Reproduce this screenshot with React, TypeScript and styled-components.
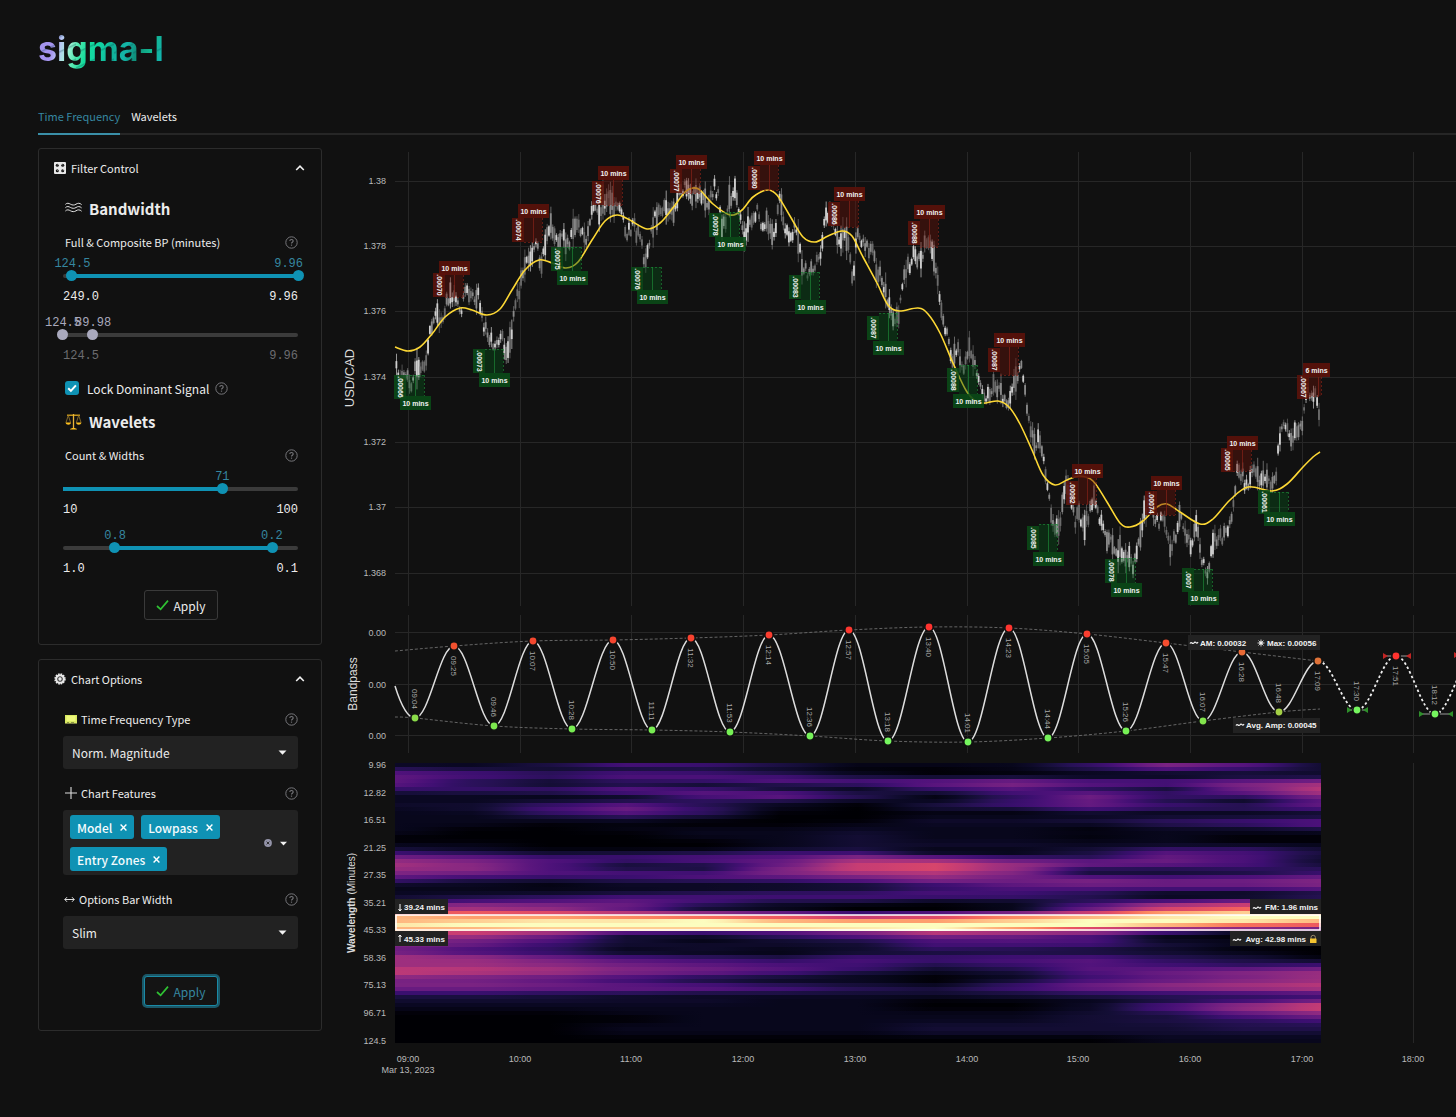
import React, { useState } from "react";
import styled, { createGlobalStyle, css } from "styled-components";

const UI_FONT = `"Noto Sans CJK SC", "Noto Sans", sans-serif`;
const MONO_FONT = `"Liberation Mono", monospace`;
const CHART_FONT = `"Liberation Sans", Arial, sans-serif`;

const color = {
  page: "#111111",
  line: "#2c2c2c",
  field: "#222222",
  text: "#ececec",
  muted: "#6c6c70",
  accent: "#0f92b4",
  accentText: "#3687a0",
  rail: "#3b3b3b",
  locked: "#a9a9bd",
};

const GlobalStyle = createGlobalStyle`
  * { box-sizing: border-box; }
  body {
    margin: 0;
    background: ${color.page};
    color: ${color.text};
    font-family: ${UI_FONT};
    font-size: 11px;
    overflow-x: hidden;
  }
  button, select, input { font: inherit; color: inherit; margin: 0; }
`;

/* ---------- page shell ---------- */

const Page = styled.div`
  min-height: 100vh;
  padding-left: 38px;
`;

const Header = styled.header`
  height: 99px;
  padding-top: 26px;
`;

const Logo = styled.h1`
  display: inline-block;
  margin: 0;
  font-family: Inter, sans-serif;
  font-weight: 700;
  font-size: 34px;
  line-height: 46px;
  color: transparent;
  background:
    linear-gradient(155deg, transparent 44%, rgba(10, 70, 80, 0.3) 50%, transparent 58%) 0 0 / 19px 15px,
    linear-gradient(105deg, #a594ee 0 15%, #b9c9f4 20%, #a5f0d8 26%, #4fe8ae 33%, #14dc9c 40%, #12d0a4 50%, #10b096 58%, #14b6a8 68%, #0f8f7a 76%, #12b890 86%, #12b3a0 92%, #11b9c9 100%);
  background-clip: text;
  -webkit-background-clip: text;
`;

const TabList = styled.nav`
  display: flex;
  gap: 11px;
  border-bottom: 2px solid #262626;
`;

const Tab = styled.button<{ $active?: boolean }>`
  height: 36px;
  margin-bottom: -2px;
  padding: 0;
  border: 0;
  border-bottom: 2px solid ${(p) => (p.$active ? "#3a8fa8" : "transparent")};
  background: none;
  font-size: 11px;
  line-height: 32px;
  color: ${(p) => (p.$active ? color.accentText : color.text)};
  cursor: pointer;
`;

const Workspace = styled.main`
  display: grid;
  grid-template-columns: 284px minmax(0, 1fr);
  gap: 14px;
  align-items: start;
  padding-top: 13px;
`;

const Sidebar = styled.aside`
  display: flex;
  flex-direction: column;
  gap: 14px;
`;

/* ---------- cards ---------- */

const Card = styled.section`
  border: 1px solid ${color.line};
  border-radius: 3px;
`;

const CardHeader = styled.button`
  display: flex;
  align-items: center;
  gap: 5px;
  width: 100%;
  height: 38px;
  padding: 0 16px 0 15px;
  border: 0;
  background: none;
  font-size: 11px;
  text-align: left;
  cursor: pointer;
`;

const Grow = styled.span`
  flex: 1;
`;

const CardBody = styled.form<{ $top: number }>`
  display: flex;
  flex-direction: column;
  padding: ${(p) => p.$top}px 23px 24px 24px;
`;

const GroupTitle = styled.h2<{ $gap?: number }>`
  display: flex;
  align-items: center;
  gap: 7px;
  height: 32px;
  margin: ${(p) => p.$gap ?? 0}px 0 6px;
  padding-left: 2px;
  font-size: 15px;
  font-weight: 700;
`;

const FieldHead = styled.div<{ $gap?: number; $indent?: number }>`
  display: flex;
  align-items: center;
  justify-content: space-between;
  height: 24px;
  margin-top: ${(p) => p.$gap ?? 0}px;
  padding-left: ${(p) => p.$indent ?? 2}px;
`;

const FieldName = styled.label`
  display: flex;
  align-items: center;
  gap: 4px;
  font-size: 11px;
`;

const HelpButton = styled.button`
  display: flex;
  padding: 0;
  border: 0;
  background: none;
  cursor: help;
`;

/* ---------- slider ---------- */

const SliderBox = styled.div<{ $gap?: number }>`
  margin-top: ${(p) => p.$gap ?? 0}px;
  font-family: ${MONO_FONT};
  font-size: 12px;
`;

const SliderValues = styled.div<{ $locked?: boolean }>`
  position: relative;
  height: 16px;
  line-height: 20px;
  color: ${(p) => (p.$locked ? color.locked : color.accentText)};
`;

const SliderValue = styled.output<{ $edge?: boolean }>`
  position: absolute;
  ${(p) =>
    p.$edge
      ? css`right: -5px;`
      : css`transform: translateX(-50%);`}
`;

const SliderRail = styled.div`
  position: relative;
  display: flex;
  align-items: center;
  height: 12px;
`;

const Rail = styled.div`
  width: 100%;
  height: 4px;
  border-radius: 2px;
  background: ${color.rail};
`;

const Fill = styled.div`
  height: 4px;
  background: ${color.accent};
`;

const Thumb = styled.input<{ $locked?: boolean }>`
  position: absolute;
  left: -6px;
  top: 0;
  width: calc(100% + 12px);
  height: 12px;
  appearance: none;
  background: transparent;
  pointer-events: none;

  &::-webkit-slider-runnable-track {
    height: 12px;
    background: transparent;
  }
  &::-webkit-slider-thumb {
    appearance: none;
    width: 11px;
    height: 11px;
    border: 0;
    border-radius: 50%;
    background: ${(p) => (p.$locked ? color.locked : color.accent)};
    pointer-events: auto;
  }
`;

const SliderEnds = styled.div<{ $locked?: boolean }>`
  display: flex;
  justify-content: space-between;
  height: 21px;
  padding-top: 7px;
  line-height: 16px;
  color: ${(p) => (p.$locked ? color.muted : color.text)};
`;

type Stop = { at: number; text: string; edge?: boolean };

function Slider(props: {
  name: string;
  stops: Stop[];
  ends: [string, string];
  locked?: boolean;
  gap?: number;
}) {
  const [positions, setPositions] = useState(props.stops.map((s) => s.at));
  const from = positions.length > 1 ? Math.min(...positions) : 0;
  const to = Math.max(...positions);
  return (
    <SliderBox $gap={props.gap}>
      <SliderValues $locked={props.locked}>
        {props.stops.map((s, i) => (
          <SliderValue key={s.text} $edge={s.edge} style={s.edge ? undefined : { left: `${positions[i]}%` }}>
            {s.text}
          </SliderValue>
        ))}
      </SliderValues>
      <SliderRail>
        <Rail>
          {!props.locked && <Fill style={{ marginLeft: `${from}%`, width: `${to - from}%` }} />}
        </Rail>
        {positions.map((p, i) => (
          <Thumb
            key={i}
            type="range"
            min={0}
            max={100}
            step="any"
            aria-label={`${props.name} ${i + 1}`}
            disabled={props.locked}
            $locked={props.locked}
            value={p}
            onChange={(e) => {
              const next = [...positions];
              next[i] = Number(e.target.value);
              setPositions(next);
            }}
          />
        ))}
      </SliderRail>
      <SliderEnds $locked={props.locked}>
        <span>{props.ends[0]}</span>
        <span>{props.ends[1]}</span>
      </SliderEnds>
    </SliderBox>
  );
}

/* ---------- form parts ---------- */

const CheckRow = styled.div`
  display: flex;
  align-items: center;
  gap: 6px;
  height: 24px;
  margin-top: 14px;
  padding-left: 2px;
`;

const CheckLabel = styled.label`
  display: flex;
  align-items: center;
  gap: 8px;
  font-size: 12px;
`;

const Checkbox = styled.input`
  appearance: none;
  width: 14px;
  height: 14px;
  border-radius: 3px;
  background: ${color.rail};
  &:checked {
    background: ${color.accent}
      url("data:image/svg+xml,%3Csvg xmlns='http://www.w3.org/2000/svg' viewBox='0 0 14 14'%3E%3Cpath d='M3.2 7.2l2.7 2.7 5-5.6' fill='none' stroke='white' stroke-width='2'/%3E%3C/svg%3E");
  }
`;

const ApplyButton = styled.button<{ $gap: number; $focused?: boolean }>`
  display: flex;
  align-items: center;
  justify-content: center;
  align-self: center;
  gap: 5px;
  width: 74px;
  height: 30px;
  margin-top: ${(p) => p.$gap}px;
  padding: 0;
  border: 1px solid ${(p) => (p.$focused ? "#1a8aa6" : "#3a3a3a")};
  border-radius: 3px;
  background: #141414;
  font-size: 12px;
  color: ${(p) => (p.$focused ? color.accentText : color.text)};
  box-shadow: ${(p) => (p.$focused ? "0 0 0 2px #1b5868" : "none")};
  cursor: pointer;
`;

const SelectBox = styled.div`
  position: relative;
  margin-top: 5px;
`;

const Select = styled.select`
  display: block;
  width: 100%;
  height: 33px;
  padding: 0 28px 0 9px;
  border: 0;
  border-radius: 3px;
  appearance: none;
  background: ${color.field};
  font-size: 12px;
`;

const SelectArrow = styled.svg`
  position: absolute;
  right: 11px;
  top: 14px;
  pointer-events: none;
`;

const MultiSelect = styled.div`
  display: flex;
  align-items: center;
  gap: 8px;
  min-height: 65px;
  margin-top: 5px;
  padding: 5px 11px 4px 7px;
  border-radius: 3px;
  background: ${color.field};
`;

const Tags = styled.div`
  display: flex;
  flex: 1;
  flex-wrap: wrap;
  gap: 8px 7px;
`;

const Tag = styled.button`
  display: flex;
  align-items: center;
  gap: 8px;
  height: 24px;
  padding: 0 7px;
  border: 0;
  border-radius: 3px;
  background: ${color.accent};
  font-size: 12px;
  font-weight: 500;
  color: #f4fbfd;
  cursor: pointer;
`;

const PlainIconButton = styled.button`
  display: flex;
  padding: 0;
  border: 0;
  background: none;
`;

/* ---------- icons ---------- */

const HelpIcon = () => (
  <svg width="13" height="13" viewBox="0 0 13 13" fill="none" stroke="#77777b" strokeWidth="1">
    <circle cx="6.5" cy="6.5" r="5.7" />
    <path d="M4.8 5.1c0-1 .8-1.6 1.7-1.6s1.7.6 1.7 1.5c0 1.200-1.700 1.200-1.700 2.500" strokeWidth="1.100" />
    <path d="M6.500 8.600v1.100" strokeWidth="1.200" />
  </svg>
);

const Help = () => (
  <HelpButton type="button" aria-label="Help">
    <HelpIcon />
  </HelpButton>
);

const KnobsIcon = () => (
  <svg width="12" height="12" viewBox="0 0 12 12">
    <rect width="12" height="12" rx="1" fill="#e8e8e8" />
    <g fill="#111">
      <circle cx="3.300" cy="3.300" r="1.500" />
      <circle cx="8.700" cy="3.300" r="1.500" />
      <circle cx="3.300" cy="8.700" r="1.500" />
      <circle cx="8.700" cy="8.700" r="1.500" />
    </g>
    <path d="M3.300 3.300l1.300-1.300M8.700 3.300l-1.300-1.300M3.300 8.700l1.300-1.300M8.700 8.700l1.300-1.300" stroke="#e8e8e8" strokeWidth=".7" />
  </svg>
);

const GearIcon = () => (
  <svg width="12" height="12" viewBox="0 0 12 12" fill="none">
    <circle cx="6" cy="6" r="4.900" stroke="#e8e8e8" strokeWidth="1.600" strokeDasharray="1.600 .966" />
    <circle cx="6" cy="6" r="3.700" stroke="#e8e8e8" strokeWidth="2.200" />
    <circle cx="6" cy="6" r="1.900" fill="#e8e8e8" />
    <circle cx="6" cy="6" r="2.300" stroke="#555" strokeWidth=".6" />
  </svg>
);

const CollapseIcon = () => (
  <svg width="10" height="8" viewBox="0 0 10 8" fill="none" stroke="#f0f0f0" strokeWidth="1.600">
    <path d="M1.200 6L5 2.200 8.800 6" />
  </svg>
);

const WavesIcon = () => (
  <svg width="17" height="12" viewBox="0 0 17 12" fill="none" stroke="#e4e4e4" strokeWidth="1">
    {[2.2, 5.5, 8.8].map((y) => (
      <path key={y} d={`M.4 ${y + 0.2}C2 ${y - 1.6} 3.800 ${y - 1} 5.500 ${y}S9.300 ${y + 1.2} 11 ${y}S14.800 ${y - 1.4} 16.600 ${y + 0.4}`} />
    ))}
  </svg>
);

const ScalesIcon = () => (
  <svg width="17" height="17" viewBox="0 0 17 17" fill="none">
    <path d="M2 2.200h13" stroke="#f2b61b" strokeWidth="1.200" />
    <path d="M8.500 1v14" stroke="#e9b53a" strokeWidth="1.300" />
    <path d="M3.300 2.400L1 9.500M3.300 2.400l2.300 7.100M13.700 2.400l-2.300 7.100M13.700 2.400L16 9.500" stroke="#9a7a30" strokeWidth=".8" />
    <path d="M.6 9.500h5.400c-.3 3-5 3-5.400 0zM11 9.500h5.400c-.3 3-5 3-5.400 0zM5 16.600c.3-2 6.700-2 7 0z" fill="#fdbf1e" />
  </svg>
);

const CheckMark = () => (
  <svg width="13" height="12" viewBox="0 0 13 12" fill="none" stroke="#2fc233" strokeWidth="1.700">
    <path d="M1 7l3.600 3.300L12 1.600" />
  </svg>
);

const ScreenIcon = () => (
  <svg width="12" height="9" viewBox="0 0 12 9">
    <rect width="12" height="8" fill="#d9ea62" />
    <rect x="1.500" y="1" width="9" height="5" fill="#eef87c" />
    <rect y="8" width="12" height="1" fill="#7c8145" />
    <path d="M2 7.500h2M6 7.500h3" stroke="#8d9444" />
  </svg>
);

const PlusIcon = () => (
  <svg width="12" height="12" viewBox="0 0 12 12" stroke="#dedede" strokeWidth="1.100">
    <path d="M6 0v12M0 6h12" />
  </svg>
);

const WidthIcon = () => (
  <svg width="11" height="7" viewBox="0 0 11 7" fill="none" stroke="#e0e0e0" strokeWidth="1">
    <path d="M.8 3.500h9.400M3 1.200L.8 3.500 3 5.800M8 1.200l2.200 2.300L8 5.800" />
  </svg>
);

const CrossIcon = () => (
  <svg width="7" height="7" viewBox="0 0 7 7" stroke="#fff" strokeWidth="1.400">
    <path d="M.6.6l5.800 5.800M6.400.6L.6 6.400" />
  </svg>
);

const ClearIcon = () => (
  <svg width="8" height="8" viewBox="0 0 8 8">
    <circle cx="4" cy="4" r="3.900" fill="#9393a8" />
    <path d="M2.600 2.600l2.800 2.800M5.400 2.600L2.600 5.400" stroke="#222" strokeWidth=".9" />
  </svg>
);

const Caret = () => (
  <svg width="7" height="5" viewBox="0 0 8 5">
    <path d="M0 .5h8L4 4.800z" fill="#f2f2f2" />
  </svg>
);

/* ---------- sidebar panels ---------- */

function FilterControl() {
  return (
    <Card>
      <CardHeader type="button" aria-expanded>
        <KnobsIcon />
        Filter Control
        <Grow />
        <CollapseIcon />
      </CardHeader>
      <CardBody $top={5} onSubmit={(e) => e.preventDefault()}>
        <GroupTitle>
          <WavesIcon />
          Bandwidth
        </GroupTitle>
        <FieldHead>
          <span>Full &amp; Composite BP (minutes)</span>
          <Help />
        </FieldHead>
        <Slider
          name="Full bandpass"
          stops={[{ at: 4, text: "124.5" }, { at: 100, text: "9.96", edge: true }]}
          ends={["249.0", "9.96"]}
        />
        <Slider
          name="Composite bandpass"
          gap={10}
          locked
          stops={[{ at: 0, text: "124.5" }, { at: 12.8, text: "89.98" }]}
          ends={["124.5", "9.96"]}
        />
        <CheckRow>
          <CheckLabel>
            <Checkbox type="checkbox" defaultChecked />
            Lock Dominant Signal
          </CheckLabel>
          <Help />
        </CheckRow>
        <GroupTitle $gap={5}>
          <ScalesIcon />
          Wavelets
        </GroupTitle>
        <FieldHead>
          <span>Count &amp; Widths</span>
          <Help />
        </FieldHead>
        <Slider name="Wavelet count" stops={[{ at: 67.8, text: "71" }]} ends={["10", "100"]} />
        <Slider
          name="Wavelet widths"
          gap={10}
          stops={[{ at: 22.2, text: "0.8" }, { at: 88.9, text: "0.2" }]}
          ends={["1.0", "0.1"]}
        />
        <ApplyButton $gap={15}>
          <CheckMark />
          Apply
        </ApplyButton>
      </CardBody>
    </Card>
  );
}

function ChartOptions() {
  return (
    <Card>
      <CardHeader type="button" aria-expanded>
        <GearIcon />
        Chart Options
        <Grow />
        <CollapseIcon />
      </CardHeader>
      <CardBody $top={9} onSubmit={(e) => e.preventDefault()}>
        <FieldHead>
          <FieldName htmlFor="tf-type">
            <ScreenIcon />
            Time Frequency Type
          </FieldName>
          <Help />
        </FieldHead>
        <SelectBox>
          <Select id="tf-type" defaultValue="norm">
            <option value="norm">Norm. Magnitude</option>
          </Select>
          <SelectArrow width="9" height="5" viewBox="0 0 8 5">
            <path d="M0 .5h8L4 4.800z" fill="#f2f2f2" />
          </SelectArrow>
        </SelectBox>
        <FieldHead $gap={12}>
          <FieldName as="span">
            <PlusIcon />
            Chart Features
          </FieldName>
          <Help />
        </FieldHead>
        <MultiSelect role="group" aria-label="Chart Features">
          <Tags>
            {["Model", "Lowpass", "Entry Zones"].map((t) => (
              <Tag key={t} type="button">
                {t}
                <CrossIcon />
              </Tag>
            ))}
          </Tags>
          <PlainIconButton type="button" aria-label="Clear all">
            <ClearIcon />
          </PlainIconButton>
          <PlainIconButton type="button" aria-label="Open list">
            <Caret />
          </PlainIconButton>
        </MultiSelect>
        <FieldHead $gap={12} $indent={1}>
          <FieldName htmlFor="bar-width">
            <WidthIcon />
            Options Bar Width
          </FieldName>
          <Help />
        </FieldHead>
        <SelectBox>
          <Select id="bar-width" defaultValue="slim">
            <option value="slim">Slim</option>
          </Select>
          <SelectArrow width="9" height="5" viewBox="0 0 8 5">
            <path d="M0 .5h8L4 4.800z" fill="#f2f2f2" />
          </SelectArrow>
        </SelectBox>
        <ApplyButton $gap={27} $focused>
          <CheckMark />
          Apply
        </ApplyButton>
      </CardBody>
    </Card>
  );
}

/* ---------- chart data ---------- */

type Pt = [number, number];

const hours = ["09:00", "10:00", "11:00", "12:00", "13:00", "14:00", "15:00", "16:00", "17:00", "18:00"].map(
  (label, i) => ({ label, x: Math.round(408 + i * 111.7) })
);

const priceTicks = ["1.38", "1.378", "1.376", "1.374", "1.372", "1.37", "1.368"].map((label, i) => ({
  label,
  y: Math.round(180.7 + i * 65.3),
}));

const waveTicks = ["9.96", "12.82", "16.51", "21.25", "27.35", "35.21", "45.33", "58.36", "75.13", "96.71", "124.5"].map(
  (label, i) => ({ label, y: Math.round(765 + i * 27.55) })
);

const lowpass: Pt[] = [
  [395, 347], [408, 351], [420, 347], [432, 334], [445, 317], [460, 308], [472, 310], [487, 315], [500, 309],
  [512, 290], [525, 270], [539, 260], [552, 263], [566, 268], [578, 262], [592, 240], [605, 221], [617, 215],
  [628, 219], [647, 229], [660, 223], [672, 209], [685, 192], [693, 188], [700, 190], [713, 204], [730, 215],
  [742, 210], [753, 197], [767, 190], [777, 195], [790, 216], [803, 237], [815, 242], [828, 236], [842, 231],
  [852, 236], [863, 257], [877, 283], [888, 305], [899, 311], [918, 308], [928, 314], [940, 333], [953, 363],
  [967, 392], [980, 403], [998, 401], [1009, 407], [1020, 424], [1032, 450], [1043, 475], [1055, 485], [1067, 480],
  [1080, 476], [1093, 481], [1107, 502], [1120, 523], [1130, 527], [1143, 521], [1157, 507], [1167, 504],
  [1180, 512], [1200, 524], [1213, 519], [1230, 500], [1248, 487], [1272, 491], [1287, 484], [1303, 467],
  [1313, 457], [1320, 452],
];

const priceMid: Pt[] = [
  [395, 363], [399, 383], [405, 378], [412, 383], [416, 365], [421, 370], [427, 352], [430, 330], [436, 312],
  [441, 326], [447, 300], [449, 293], [455, 304], [461, 310], [466, 290], [472, 298], [478, 293], [482, 320],
  [488, 335], [492, 345], [497, 340], [501, 336], [506, 358], [511, 335], [515, 305], [520, 285], [525, 262],
  [532, 258], [536, 242], [540, 266], [546, 235], [551, 226], [556, 242], [562, 240], [568, 243], [574, 225],
  [580, 228], [586, 238], [592, 212], [600, 212], [605, 197], [612, 203], [620, 210], [627, 234], [633, 225],
  [640, 240], [645, 262], [649, 248], [653, 220], [660, 208], [667, 206], [673, 214], [677, 195], [685, 187],
  [690, 198], [697, 190], [704, 197], [708, 206], [714, 188], [718, 195], [721, 223], [725, 218], [729, 200],
  [735, 190], [740, 220], [745, 235], [752, 220], [757, 212], [762, 230], [768, 222], [773, 243], [777, 218],
  [779, 192], [783, 222], [789, 240], [794, 226], [799, 250], [803, 270], [810, 273], [820, 258], [823, 228],
  [827, 213], [833, 225], [838, 247], [845, 227], [850, 257], [852, 282], [855, 253], [857, 226], [862, 246],
  [872, 250], [875, 266], [882, 281], [887, 305], [892, 317], [898, 317], [901, 293], [905, 273], [913, 257],
  [920, 257], [927, 240], [933, 256], [938, 290], [945, 330], [952, 357], [957, 350], [963, 370], [969, 342],
  [973, 362], [978, 373], [985, 396], [990, 390], [997, 387], [1007, 404], [1013, 386], [1018, 370], [1020, 358],
  [1025, 393], [1030, 430], [1035, 443], [1038, 440], [1043, 460], [1048, 493], [1052, 517], [1057, 530],
  [1060, 520], [1063, 490], [1067, 480], [1070, 507], [1075, 520], [1078, 510], [1083, 527], [1088, 517],
  [1093, 495], [1100, 522], [1107, 537], [1115, 550], [1123, 553], [1133, 566], [1138, 546], [1143, 512],
  [1148, 507], [1153, 510], [1158, 527], [1163, 517], [1170, 546], [1175, 537], [1180, 514], [1185, 537],
  [1190, 546], [1197, 522], [1200, 553], [1207, 576], [1212, 542], [1217, 538], [1222, 537], [1227, 535],
  [1232, 507], [1237, 470], [1242, 477], [1248, 490], [1254, 464], [1258, 480], [1263, 477], [1270, 487],
  [1275, 479], [1278, 447], [1282, 428], [1290, 436], [1297, 430], [1302, 420], [1305, 397], [1313, 393],
  [1317, 403], [1320, 427],
];

type Zone = { x: number; side: "sell" | "buy"; label: number; edge: number; tag: number; amp: string; text?: string };

const zones: Zone[] = [
  { x: 454, side: "sell", label: 261, edge: 297, tag: 273, amp: ".00070" },
  { x: 533, side: "sell", label: 204, edge: 242, tag: 218, amp: ".00074" },
  { x: 613, side: "sell", label: 166, edge: 205, tag: 181, amp: ".00076" },
  { x: 691, side: "sell", label: 155, edge: 193, tag: 169, amp: ".00077" },
  { x: 769, side: "sell", label: 151, edge: 190, tag: 166, amp: ".00080" },
  { x: 849, side: "sell", label: 187, edge: 227, tag: 202, amp: ".00086" },
  { x: 929, side: "sell", label: 205, edge: 247, tag: 221, amp: ".00088" },
  { x: 1009, side: "sell", label: 333, edge: 375, tag: 348, amp: ".00087" },
  { x: 1087, side: "sell", label: 464, edge: 504, tag: 481, amp: ".00082" },
  { x: 1166, side: "sell", label: 476, edge: 515, tag: 491, amp: ".00074" },
  { x: 1242, side: "sell", label: 436, edge: 471, tag: 448, amp: ".00065" },
  { x: 1318, side: "sell", label: 363, edge: 396, tag: 375, amp: ".00067", text: "6 mins" },
  { x: 415, side: "buy", label: 396, edge: 375, tag: 375, amp: ".00066" },
  { x: 494, side: "buy", label: 373, edge: 349, tag: 349, amp: ".00073" },
  { x: 572, side: "buy", label: 271, edge: 247, tag: 247, amp: ".00075" },
  { x: 652, side: "buy", label: 290, edge: 267, tag: 267, amp: ".00076" },
  { x: 730, side: "buy", label: 237, edge: 212, tag: 213, amp: ".00078" },
  { x: 810, side: "buy", label: 300, edge: 272, tag: 275, amp: ".00083" },
  { x: 888, side: "buy", label: 341, edge: 313, tag: 316, amp: ".00087" },
  { x: 968, side: "buy", label: 394, edge: 365, tag: 368, amp: ".00088" },
  { x: 1048, side: "buy", label: 552, edge: 524, tag: 526, amp: ".00085" },
  { x: 1126, side: "buy", label: 583, edge: 558, tag: 559, amp: ".00078" },
  { x: 1203, side: "buy", label: 591, edge: 569, tag: 568, amp: ".0007" },
  { x: 1279, side: "buy", label: 512, edge: 492, tag: 490, amp: ".00061" },
];

type Turn = { t?: string; x: number; y: number; dot: string };

const turns: Turn[] = [
  { t: "09:04", x: 415, y: 718, dot: "#8bdc4a" },
  { t: "09:25", x: 454, y: 646, dot: "#f2512f" },
  { t: "09:46", x: 494, y: 726, dot: "#7de84f" },
  { t: "10:07", x: 533, y: 641, dot: "#f5482f" },
  { t: "10:28", x: 572, y: 729, dot: "#78ec52" },
  { t: "10:50", x: 613, y: 640, dot: "#f5452f" },
  { t: "11:11", x: 652, y: 730, dot: "#78ec52" },
  { t: "11:32", x: 691, y: 638, dot: "#f7422f" },
  { t: "11:53", x: 730, y: 732, dot: "#76f055" },
  { t: "12:14", x: 769, y: 635, dot: "#fa3d2f" },
  { t: "12:36", x: 810, y: 736, dot: "#76f25a" },
  { t: "12:57", x: 849, y: 630, dot: "#fc372f" },
  { t: "13:18", x: 888, y: 741, dot: "#76f65f" },
  { t: "13:40", x: 929, y: 627, dot: "#ff332f" },
  { t: "14:01", x: 968, y: 742, dot: "#76f65f" },
  { t: "14:23", x: 1009, y: 628, dot: "#fe352f" },
  { t: "14:44", x: 1048, y: 738, dot: "#76f25a" },
  { t: "15:05", x: 1087, y: 634, dot: "#fa3d2f" },
  { t: "15:26", x: 1126, y: 731, dot: "#76f055" },
  { t: "15:47", x: 1166, y: 643, dot: "#f54d2f" },
  { t: "16:07", x: 1203, y: 721, dot: "#82e44c" },
  { t: "16:28", x: 1242, y: 652, dot: "#ea6a35" },
  { t: "16:48", x: 1279, y: 712, dot: "#a3cf45" },
  { t: "17:09", x: 1318, y: 661, dot: "#df7238" },
  { t: "17:30", x: 1357, y: 710, dot: "#76f65f" },
  { t: "17:51", x: 1396, y: 656, dot: "#ff332f" },
  { t: "18:12", x: 1435, y: 714, dot: "#76f65f" },
  { x: 1475, y: 655, dot: "#ff332f" },
];

/* One string per wavelet row, one letter per time sample: a = 0 ... u = 1. */
const spectrum = `
bbdgfdbbbeigc dcbabbaabdgec gfegfdbaabbcc gfeffecbbaabb gdcefhghigghi gdbbacegihgik effhfbaefbahl
ccdfggdcfhfgk bbaafheadheeh bbcddcbbegcaf ccegdbadfhfeh bcfhebaccfeef bbegeaaaabaab bbcdcaabbbccc
bbbbaaaccdefg bbaaaabbbbdeg baabbbbbbabbc baaabbcbbbbbb aaaabbcbbabaa aaaaabcbbbbaa bbaaabcccbbbb
cbaaabcbbceec edccdfeaadgfd hgefffigecgfc jigeghkkhhhfc kifccgmnkhgfc jjfccimnjddee ihggfikkibbbd
gfeegghjhgfgh eccddegihihhi bbabbbbdghhhi bbbbbbceffffg bbbcdeefedbbc cdeffffffdaac defgfddbbdfhh
ijihdbaabfkmn kkjgcbaabhnpq nnmkigefhlqsr rqqponlmprtuu rstturqqsuutr tuuuuuuuuuron rrsssstuqmjih
lljfefhkjieba kkhccegihfbaa hgfcabceffbba iheccccfffdba hfebcbcedcbaa gedbaabbcccba lkhfedffffdca
jjigfefefgedc jjihgfedefede llkihgfcdgggh mlkihfcbcfhjk ihgfdcbabeghj hhgecbbacfgij iihgfdcbehjkl
hhhhhgedfhjkl eeddcccccddef cccbbbbbcdeee cccccbbaaabdg bbbbbbbaacgkn bbbbbbbaabfjm aaabbbbbbcdgi
aaaabbbbbccfh aaaabbbbbcdde aaabbbbccccdd aaabbbbccccdd aaabbbbcccccc aaaaaaaaaabbb aaaaaaaaaabbb
`
  .trim()
  .split(/\s+/)
  .map((row) => [...row].map((c) => (c.charCodeAt(0) - 97) / 20));

const magmaStops: [number, number, number][] = [
  [0, 0, 4], [8, 7, 30], [20, 14, 54], [38, 17, 84], [59, 15, 112], [80, 18, 123], [101, 26, 128],
  [120, 34, 130], [140, 41, 129], [160, 48, 126], [183, 55, 121], [202, 62, 114], [222, 73, 104],
  [237, 89, 95], [247, 112, 92], [252, 137, 97], [254, 159, 109], [254, 183, 127], [254, 207, 146],
  [253, 231, 169], [252, 253, 191],
];

function magma(v: number) {
  const p = Math.min(Math.max(v, 0), 0.9999) * 20;
  const i = Math.floor(p);
  const mix = magmaStops[i].map((c, k) => Math.round(c + (magmaStops[i + 1][k] - c) * (p - i)));
  return `rgb(${mix.join(",")})`;
}

/* Neighbouring wavelets share energy outside of the dominant band; samples in between are eased. */
const heatRows = spectrum.map((row, r) => {
  const inBand = r > 36 && r < 43;
  const level = row.map((v, i) => {
    if (inBand) return v;
    const above = r === 43 ? v : (spectrum[r - 1] ?? row)[i];
    const below = r === 36 ? v : (spectrum[r + 1] ?? row)[i];
    return (v * 0.56 + above * 0.22 + below * 0.22) * 0.94;
  });
  const out: number[] = [];
  for (let i = 0; i < 48; i++) {
    const k = Math.floor(i / 4);
    const t = (i % 4) / 4;
    const e = t * t * (3 - 2 * t) * 0.5 + t * 0.5;
    out.push(level[k] + (level[k + 1] - level[k]) * e);
  }
  out.push(level[12]);
  return out;
});

/* ---------- chart geometry ---------- */

const f1 = (n: number) => n.toFixed(1);

function smooth(points: Pt[]) {
  let d = `M${points[0][0]} ${points[0][1]}`;
  for (let i = 0; i < points.length - 1; i++) {
    const p0 = points[i - 1] ?? points[i];
    const p1 = points[i];
    const p2 = points[i + 1];
    const p3 = points[i + 2] ?? p2;
    d += `C${f1(p1[0] + (p2[0] - p0[0]) / 6)} ${f1(p1[1] + (p2[1] - p0[1]) / 6)} ${f1(p2[0] - (p3[0] - p1[0]) / 6)} ${f1(
      p2[1] - (p3[1] - p1[1]) / 6
    )} ${p2[0]} ${p2[1]}`;
  }
  return d;
}

function swing(points: Turn[]) {
  let d = `M${points[0].x} ${points[0].y}`;
  for (let i = 1; i < points.length; i++) {
    const a = points[i - 1];
    const b = points[i];
    const pull = (b.x - a.x) * 0.37;
    d += `C${f1(a.x + pull)} ${a.y} ${f1(b.x - pull)} ${b.y} ${b.x} ${b.y}`;
  }
  return d;
}

const priceBars = (() => {
  let seed = 20230313;
  const rand = () => {
    seed = (seed * 1103515245 + 12345) & 0x7fffffff;
    return seed / 0x7fffffff;
  };
  const shades = ["#cfcfcf", "#8a8a8a", "#6c6c6c"];
  const bars: { x: number; y: number; h: number; body: number; shade: string }[] = [];
  let k = 0;
  for (let x = 396; x <= 1320; x += 1.86) {
    while (k < priceMid.length - 2 && priceMid[k + 1][0] < x) k++;
    const [x0, y0] = priceMid[k];
    const [x1, y1] = priceMid[k + 1];
    const mid = y0 + ((y1 - y0) * (x - x0)) / (x1 - x0) + (rand() - 0.5) * 12;
    const h = 8 + rand() * rand() * 36;
    bars.push({ x, y: mid - h / 2, h, body: 0.3 + rand() * 0.5, shade: shades[Math.floor(rand() * 3)] });
  }
  return bars;
})();

const known = turns.slice(0, 24);
const highs = known.filter((_, i) => i % 2 === 1);
const lows = known.filter((_, i) => i % 2 === 0);
const upper: Pt[] = [[395, 651], ...highs.map((p): Pt => [p.x, p.y]), [1320, 661]];
const lower: Pt[] = [[395, 717], ...lows.map((p): Pt => [p.x, p.y]), [1320, 709]];

/* ---------- chart ---------- */

const ChartSvg = styled.svg`
  display: block;
  width: 100%;
  height: 937px;
  font-family: ${CHART_FONT};
`;

const Tick = styled.text`
  font-size: 9px;
  fill: #b9b9b9;
`;

const AxisTitle = styled.text<{ $size: number }>`
  font-size: ${(p) => p.$size}px;
  fill: #dcdcdc;
`;

const ZoneText = styled.text`
  font-size: 7px;
  font-weight: 700;
  fill: #f1f1f1;
`;

const TimeText = styled.text`
  font-size: 8px;
  fill: #a8a8a8;
`;

const NoteText = styled.text`
  font-size: 8px;
  font-weight: 700;
  fill: #f2f2f2;
`;

function ZoneMark({ z }: { z: Zone }) {
  const sell = z.side === "sell";
  const fill = sell ? "#5c120a" : "#0a4a17";
  const bright = sell ? "#8c2418" : "#1d8a38";
  const top = sell ? z.label + 14 : z.edge;
  const bottom = sell ? z.edge : z.label;
  const w = z.text ? 27 : 31;
  const half = z.text ? 3 : 9;
  const left = z.x - 9;
  return (
    <g>
      <rect x={left} y={top} width={9 + half} height={bottom - top} fill={sell ? "#6a120a" : "#08521a"} fillOpacity=".42" />
      <g stroke={bright} strokeOpacity=".65" fill="none" shapeRendering="crispEdges">
        <path
          d={`M${left} ${sell ? bottom : top}H${z.x + half}M${z.x + half} ${top}V${bottom}`}
          strokeDasharray="2 2"
        />
        <path d={`M${z.x} ${top}V${bottom}`} />
      </g>
      <rect x={z.x - 21} y={z.tag} width="12" height="24" fill={fill} fillOpacity=".88" />
      <rect x={z.x - 15} y={z.label} width={w} height="14" fill={fill} fillOpacity=".9" />
      <ZoneText x={z.x - 15 + w / 2} y={z.label + 10} textAnchor="middle">
        {z.text ?? "10 mins"}
      </ZoneText>
      <ZoneText transform={`translate(${z.x - 17} ${z.tag + 12}) rotate(90)`} textAnchor="middle">
        {z.amp}
      </ZoneText>
    </g>
  );
}

const Squiggle = ({ x, y }: { x: number; y: number }) => (
  <path
    d={`M${x} ${y + 0.5}q1-1.500 2-.5t2-.2q1-1.300 2-.2t2-.4`}
    fill="none"
    stroke="#f2f2f2"
    strokeWidth="1.300"
  />
);

function Charts() {
  return (
    <ChartSvg role="img" aria-label="USD/CAD time frequency analysis">
      <defs>
        {heatRows.map((row, r) => (
          <linearGradient id={`row${r}`} key={r}>
            {row.map((v, i) => (
              <stop key={i} offset={i / 48} stopColor={magma(v)} />
            ))}
          </linearGradient>
        ))}
      </defs>
      <g transform="translate(-336 -148)">
        <g stroke="#272727" shapeRendering="crispEdges">
          {hours.map((h) => (
            <path key={h.label} d={`M${h.x}.5 152V606M${h.x}.5 615V753M${h.x}.5 763V1043`} />
          ))}
          {priceTicks.map((p) => (
            <path key={p.label} d={`M395 ${p.y}.5H2600`} />
          ))}
          {[632, 684, 735].map((y) => (
            <path key={y} d={`M395 ${y}.5H2600`} />
          ))}
        </g>

        {priceTicks.map((p) => (
          <Tick key={p.label} x="386" y={p.y + 3} textAnchor="end">{p.label}</Tick>
        ))}
        {[632, 684, 735].map((y) => (
          <Tick key={y} x="386" y={y + 4} textAnchor="end">0.00</Tick>
        ))}
        {waveTicks.map((p) => (
          <Tick key={p.label} x="386" y={p.y + 3} textAnchor="end">{p.label}</Tick>
        ))}
        {hours.map((h) => (
          <Tick key={h.label} x={h.x} y="1062" textAnchor="middle">{h.label}</Tick>
        ))}
        <Tick x="408" y="1073" textAnchor="middle">Mar 13, 2023</Tick>

        <AxisTitle $size={13} transform="translate(354 378) rotate(-90)" textAnchor="middle">USD/CAD</AxisTitle>
        <AxisTitle $size={12} transform="translate(357 684) rotate(-90)" textAnchor="middle">Bandpass</AxisTitle>
        <AxisTitle $size={10} transform="translate(355 903) rotate(-90)" textAnchor="middle">
          <tspan fontWeight="700">Wavelength</tspan> (Minutes)
        </AxisTitle>

        {priceBars.map((b, i) => (
          <g key={i} fill={b.shade}>
            <rect x={b.x} y={b.y} width="1" height={b.h} fillOpacity=".7" />
            <rect x={b.x - 0.5} y={b.y + (b.h * (1 - b.body)) / 2} width="1.800" height={b.h * b.body} />
          </g>
        ))}
        <path d={smooth(lowpass)} fill="none" stroke="#fdd835" strokeWidth="1.600" />
        {zones.map((z) => (
          <ZoneMark key={z.side + z.x} z={z} />
        ))}

        <g fill="none">
          <path d={smooth(upper)} stroke="#6e6e6e" strokeWidth=".9" strokeDasharray="3 2" />
          <path d={smooth(lower)} stroke="#6e6e6e" strokeWidth=".9" strokeDasharray="3 2" />
          <path d="M395 686Q405 718 415 718" stroke="#dedede" strokeWidth="1.500" />
          <path d={swing(known)} stroke="#dedede" strokeWidth="1.500" />
          <path d={swing(turns.slice(23))} stroke="#f0f0f0" strokeWidth="1.800" strokeDasharray="2.500 2.500" />
          <path d="M1348 710h18M1385 656h23M1421 714h30" stroke="#9a9a9a" />
        </g>
        <path d="M1347 707v6l5-3zM1368 707v6l-5-3zM1419 711v6l5-3zM1453 711v6l-5-3z" fill="#2f8f2b" />
        <path d="M1383 653v6l5-3zM1411 653v6l-5-3zM1454 652v6l5-3z" fill="#c22524" />
        {turns.map((p, i) => (
          <g key={p.x}>
            <circle cx={p.x} cy={p.y} r="4.200" fill={p.dot} stroke="#111" strokeWidth="1.600" />
            {p.t && (
              <TimeText
                transform={`translate(${p.x - 3} ${p.y + (i % 2 ? 20 : -19)}) rotate(90)`}
                textAnchor="middle"
              >
                {p.t}
              </TimeText>
            )}
          </g>
        ))}

        <rect x="1188" y="635" width="132" height="15" fill="#222" />
        <Squiggle x={1190} y={643} />
        <NoteText x="1200" y="646">AM: 0.00032</NoteText>
        <g stroke="#eee" strokeWidth=".8">
          <circle cx="1261" cy="643" r="1.300" fill="#eee" />
          <path d="M1261 639.500v7M1257.500 643h7M1258.500 640.500l5 5M1263.500 640.500l-5 5" />
        </g>
        <NoteText x="1267" y="646">Max: 0.00056</NoteText>
        <rect x="1233" y="718" width="87" height="15" fill="#222" />
        <Squiggle x={1236} y={725} />
        <NoteText x="1246" y="728">Avg. Amp: 0.00045</NoteText>

        <g shapeRendering="crispEdges">
          {heatRows.map((_, r) => (
            <rect key={r} x="395" y={763 + r * 4} width="926" height="4" fill={`url(#row${r})`} />
          ))}
        </g>
        <rect x="396" y="915" width="924" height="15" fill="none" stroke="#fff" strokeWidth="1.500" />
        <g fill="#222">
          <rect x="395" y="899" width="53" height="15" />
          <rect x="395" y="931" width="53" height="15" />
          <rect x="1250" y="899" width="71" height="15" />
          <rect x="1230" y="931" width="91" height="15" />
        </g>
        <path d="M400 904v7M398.500 909l1.500 2 1.500-2M400 942v-7M398.500 937l1.500-2 1.500 2" fill="none" stroke="#fff" />
        <NoteText x="404" y="910">39.24 mins</NoteText>
        <NoteText x="404" y="942">45.33 mins</NoteText>
        <Squiggle x={1253} y={908} />
        <NoteText x="1318" y="910" textAnchor="end">FM: 1.96 mins</NoteText>
        <Squiggle x={1233} y={940} />
        <NoteText x="1306" y="942" textAnchor="end">Avg: 42.98 mins</NoteText>
        <path d="M1311 939v-1.500a2.200 2.200 0 0 1 4.400 0v1.500" fill="none" stroke="#9a8a6a" />
        <rect x="1310" y="938.500" width="6.500" height="4.500" rx=".5" fill="#f4c430" />
      </g>
    </ChartSvg>
  );
}

export default function App() {
  return (
    <Page>
      <GlobalStyle />
      <Header>
        <Logo>sigma-l</Logo>
      </Header>
      <TabList aria-label="Views">
        <Tab type="button" $active>Time Frequency</Tab>
        <Tab type="button">Wavelets</Tab>
      </TabList>
      <Workspace>
        <Sidebar>
          <FilterControl />
          <ChartOptions />
        </Sidebar>
        <Charts />
      </Workspace>
    </Page>
  );
}
